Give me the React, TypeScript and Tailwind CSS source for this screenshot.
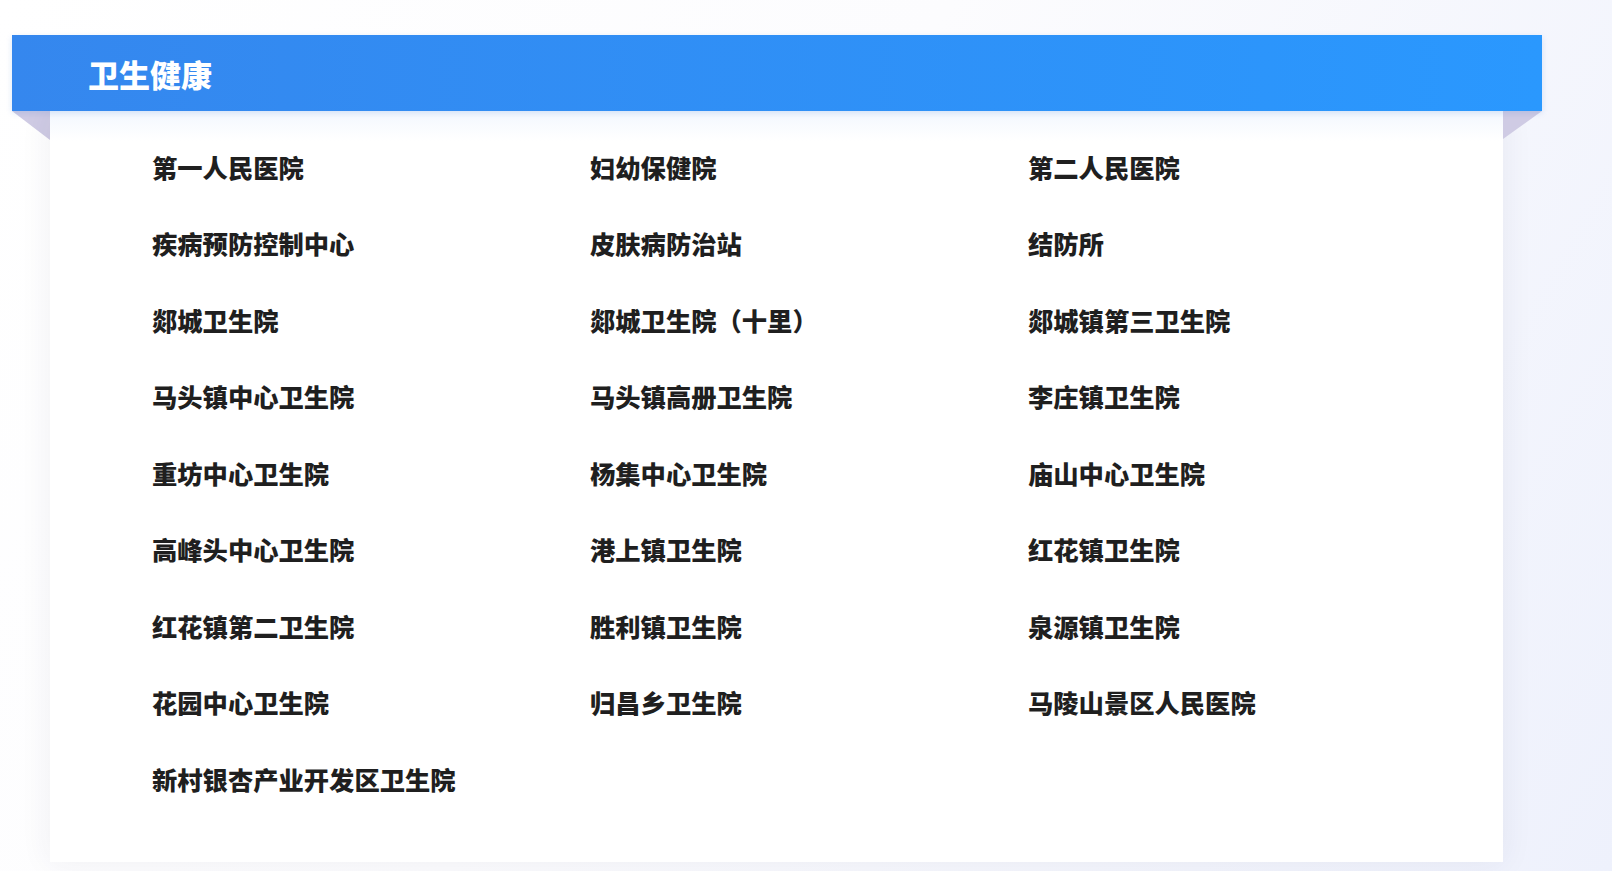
import React from "react";

const items = [
  "第一人民医院", "妇幼保健院", "第二人民医院",
  "疾病预防控制中心", "皮肤病防治站", "结防所",
  "郯城卫生院", "郯城卫生院（十里）", "郯城镇第三卫生院",
  "马头镇中心卫生院", "马头镇高册卫生院", "李庄镇卫生院",
  "重坊中心卫生院", "杨集中心卫生院", "庙山中心卫生院",
  "高峰头中心卫生院", "港上镇卫生院", "红花镇卫生院",
  "红花镇第二卫生院", "胜利镇卫生院", "泉源镇卫生院",
  "花园中心卫生院", "归昌乡卫生院", "马陵山景区人民医院",
  "新村银杏产业开发区卫生院",
];

export default function App() {
  return (
    <div
      className="w-full h-[871px] overflow-hidden pt-[35px] pl-[12px] bg-[linear-gradient(120deg,#ffffff_0%,#fcfcfe_45%,#eef1fc_100%)]"
      style={{ fontFamily: '"Noto Sans CJK SC", "Microsoft YaHei", sans-serif' }}
    >
      <div className="w-[1530px]">
        {/* 标题栏 */}
        <div className="h-[76px] flex items-center pl-[76px] bg-[linear-gradient(90deg,#3587ee_0%,#2a98fe_100%)] shadow-[0_2px_6px_rgba(30,100,200,0.15)] relative z-10">
          <h1 className="text-[31px] font-black text-white leading-none">卫生健康</h1>
        </div>

        <div className="flex">
          {/* 左折角 */}
          <div className="w-[38px] shrink-0">
            <svg width="38" height="29" viewBox="0 0 38 29" className="block">
              <polygon points="0,0 38,0 38,29" fill="#cfcbe4" />
            </svg>
          </div>

          {/* 内容卡片 */}
          <div className="w-[1453px] shrink-0 shadow-[0_0_30px_rgba(40,40,80,0.07)] pl-[102px] pt-[18px] pb-[44px] bg-[linear-gradient(180deg,#f3f7fe_0px,#ffffff_30px)]">
            <div className="grid grid-cols-[438px_438px_438px]">
              {items.map((name) => (
                <div key={name} className="h-[76.5px] flex items-center">
                  <span className="text-[25.3px] font-black text-[#1f1f1f] leading-none whitespace-nowrap">
                    {name}
                  </span>
                </div>
              ))}
            </div>
          </div>

          {/* 右折角 */}
          <div className="w-[39px] shrink-0">
            <svg width="39" height="28" viewBox="0 0 39 28" className="block">
              <polygon points="0,0 39,0 0,28" fill="#cfcbe4" />
            </svg>
          </div>
        </div>
      </div>
    </div>
  );
}
